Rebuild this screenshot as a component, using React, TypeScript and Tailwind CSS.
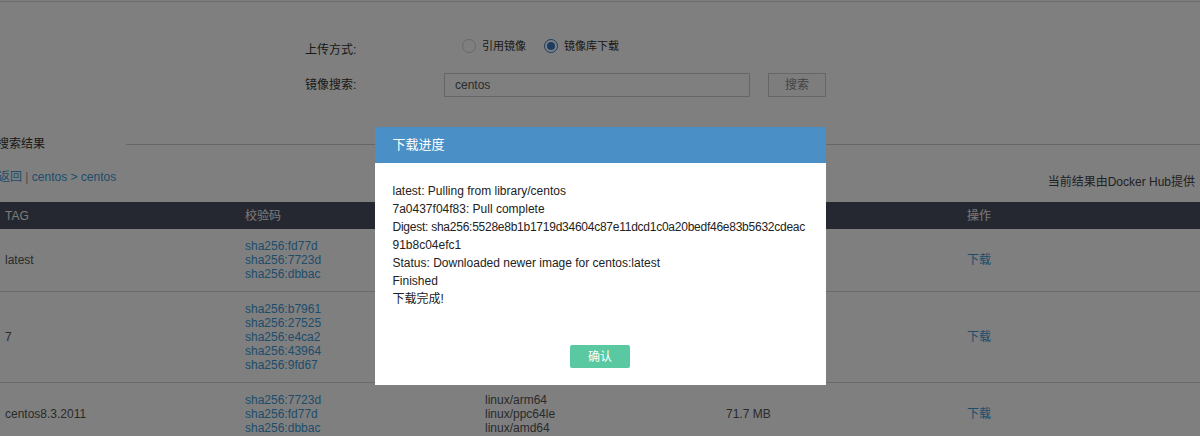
const font = "font-['Liberation_Sans','Noto_Sans_CJK_SC',sans-serif]";

type Row = {
  tag: string;
  digests: string[];
  archs: string[];
  size: string;
};

const rows: Row[] = [
  {
    tag: "latest",
    digests: ["sha256:fd77d", "sha256:7723d", "sha256:dbbac"],
    archs: ["linux/arm64", "linux/ppc64le", "linux/amd64"],
    size: "71.7 MB",
  },
  {
    tag: "7",
    digests: ["sha256:b7961", "sha256:27525", "sha256:e4ca2", "sha256:43964", "sha256:9fd67"],
    archs: ["linux/arm64", "linux/ppc64le", "linux/amd64", "linux/386", "linux/arm/v7"],
    size: "72.6 MB",
  },
  {
    tag: "centos8.3.2011",
    digests: ["sha256:7723d", "sha256:fd77d", "sha256:dbbac"],
    archs: ["linux/arm64", "linux/ppc64le", "linux/amd64"],
    size: "71.7 MB",
  },
];

const logLines = [
  "latest: Pulling from library/centos",
  "7a0437f04f83: Pull complete",
  "Digest: sha256:5528e8b1b1719d34604c87e11dcd1c0a20bedf46e83b5632cdeac",
  "91b8c04efc1",
  "Status: Downloaded newer image for centos:latest",
  "Finished",
  "下载完成!",
];

function Radio({ checked, label }: { checked?: boolean; label: string }) {
  return (
    <label className="flex items-center gap-[6px]">
      <span
        className={
          checked
            ? "flex h-[14px] w-[14px] items-center justify-center rounded-full border border-[#3b79c8] bg-white"
            : "h-[14px] w-[14px] rounded-full border border-[#d0d0d0] bg-white"
        }
      >
        {checked && <span className="h-[8px] w-[8px] rounded-full bg-[#3b79c8]" />}
      </span>
      <span className="text-[11px]">{label}</span>
    </label>
  );
}

export default function App() {
  return (
    <div className={`relative h-[436px] w-[1200px] overflow-hidden bg-white text-[12px] text-[#333] ${font}`}>
      {/* 页面内容 */}
      <div className="mt-px border-t border-[#d8d8d8]" />

      {/* 上传表单 */}
      <div className="ml-[305px] mt-[35px] flex flex-col gap-[12px]">
        <div className="flex h-[24px] items-center">
          <span className="w-[139px] pt-[2px]">上传方式:</span>
          <div className="ml-[18px] flex items-center gap-[18px] pb-[6px]">
            <Radio label="引用镜像" />
            <Radio checked label="镜像库下载" />
          </div>
        </div>
        <div className="flex h-[24px] items-center">
          <span className="w-[139px]">镜像搜索:</span>
          <div className="flex h-[24px] w-[306px] items-center border border-[#ccc] px-[10px] text-[#555]">
            centos
          </div>
          <button className="ml-[18px] h-[24px] w-[58px] border border-[#ccc] bg-[#fafafa] text-[#888]">
            搜索
          </button>
        </div>
      </div>

      {/* 搜索结果 */}
      <div className="mt-[40px] flex h-[14px] items-center">
        <span className="ml-[-3px] whitespace-nowrap">搜索结果</span>
        <div className="ml-[81px] flex-1 border-t border-[#cfcfcf]" />
      </div>

      <div className="mt-[17px] flex items-end justify-between">
        <div className="ml-[-2px] whitespace-nowrap text-[#3c9ad6]">
          返回 <span className="text-[#999]">|</span> centos &gt; centos
        </div>
        <div className="mr-[5px] translate-y-[5px] text-[#444]">当前结果由Docker Hub提供</div>
      </div>

      {/* 表格 */}
      <div className="mt-[16px]">
        <div className="grid h-[27px] grid-cols-5 items-center bg-[#4a5060] text-[#f4f4f4]">
          <div className="pl-[5px]">TAG</div>
          <div className="pl-[5px]">校验码</div>
          <div className="pl-[5px]">系统架构</div>
          <div className="pl-[5px]">大小</div>
          <div className="pl-[7px]">操作</div>
        </div>
        {rows.map((row) => (
          <div
            key={row.tag}
            className="grid grid-cols-5 items-center border-b border-[#d4d4d4] py-[10px] leading-[14px]"
          >
            <div className="pl-[5px] text-[#555]">{row.tag}</div>
            <div className="pl-[5px] text-[#3c9ad6]">
              {row.digests.map((d, i) => (
                <div key={i}>{d}</div>
              ))}
            </div>
            <div className="pl-[5px] text-[#555]">
              {row.archs.map((a, i) => (
                <div key={i}>{a}</div>
              ))}
            </div>
            <div className="pl-[6px] text-[#555]">{row.size}</div>
            <div className="pl-[7px] text-[#3c9ad6]">下载</div>
          </div>
        ))}
      </div>

      {/* 遮罩和弹窗 */}
      <div className="absolute inset-0 bg-black/50">
        <div className="mx-auto mt-[127px] w-[451px] bg-white">
          <div className="flex h-[36px] items-center bg-[#4a90c6] pl-[18px] text-[13px] text-white">
            下载进度
          </div>
          <div className="px-[18px] pt-[19px] pb-[17px]">
            <div className="whitespace-nowrap leading-[18px] text-[#222]">
              {logLines.map((l, i) => (
                <div key={i} className={l.startsWith("Digest") ? "tracking-[-0.25px]" : ""}>
                  {l}
                </div>
              ))}
            </div>
            <div className="mt-[37px] flex justify-center">
              <button className="h-[23px] w-[60px] rounded-[2px] bg-[#5ac8a0] text-white">确认</button>
            </div>
          </div>
        </div>
      </div>
    </div>
  );
}
